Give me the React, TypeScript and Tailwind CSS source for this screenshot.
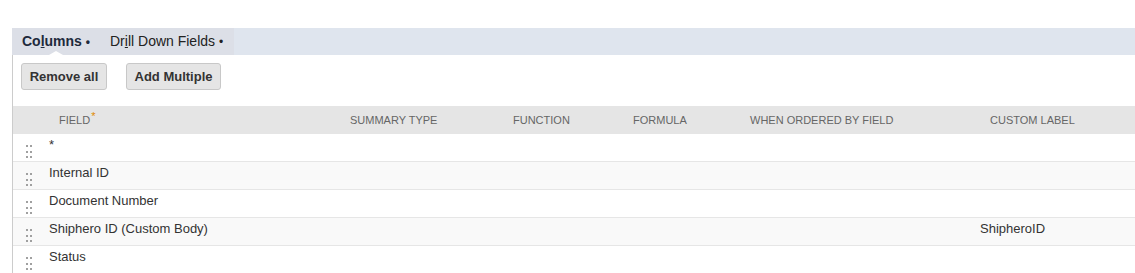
import React from "react";

const cols = "grid grid-cols-[26px_291px_163px_120px_117px_240px_1fr]";

function Handle() {
  return (
    <div className="grid grid-cols-2 gap-x-[2px] gap-y-[1px] w-[6px]">
      {Array.from({ length: 6 }).map((_, i) => (
        <div key={i} className="w-[2px] h-[2px] bg-[#a0a0a0]" />
      ))}
    </div>
  );
}

const rows = [
  { f: "*", label: "" },
  { f: "Internal ID", label: "" },
  { f: "Document Number", label: "" },
  { f: "Shiphero ID (Custom Body)", label: "ShipheroID" },
  { f: "Status", label: "" },
];

export default function App() {
  return (
    <div className="w-[1135px] h-[273px] bg-white overflow-hidden font-['Liberation_Sans',Arial,sans-serif] text-[13px] text-[#333]">
      <div className="h-[28px]" />
      <div className="ml-[12px] h-[27px] bg-[#dfe5ee] flex">
        <div className="relative flex items-center bg-[#dcdfe7] w-[222px] h-full text-[14px]">
          <span className="ml-[10px] font-bold text-[#1e2a3c]">
            Co<u>l</u>umns <span className="text-[12px]">•</span>
          </span>
          <span className="ml-[20px] text-[#222]">
            Dr<u>i</u>ll Down Fields <span className="text-[12px]">•</span>
          </span>
          <div className="absolute left-[37px] bottom-0 w-0 h-0 border-l-[7px] border-r-[7px] border-b-[4px] border-l-transparent border-r-transparent border-b-white" />
        </div>
      </div>
      <div className="ml-[12px] border-l border-[#cccccc]">
        <div className="flex gap-[19px] pl-[8px] pt-[8px] pb-[16px]">
          <button className="h-[27px] w-[86px] bg-[#e5e5e5] border border-[#c8c8c8] rounded-[3px] font-bold text-[13px] text-[#333]">
            Remove all
          </button>
          <button className="h-[27px] w-[95px] bg-[#e5e5e5] border border-[#c8c8c8] rounded-[3px] font-bold text-[13px] text-[#333]">
            Add Multiple
          </button>
        </div>
        <div className={`${cols} h-[28px] bg-[#e5e5e5] items-center text-[11px] text-[#666] uppercase`}>
          <div />
          <div className="pl-[20px]">
            Field<span className="text-[#e08a00] relative -top-[4px] ml-[1px]">*</span>
          </div>
          <div className="pl-[20px]">Summary Type</div>
          <div className="pl-[20px]">Function</div>
          <div className="pl-[20px]">Formula</div>
          <div className="pl-[20px]">When Ordered By Field</div>
          <div className="pl-[20px]">Custom Label</div>
        </div>
        {rows.map((r, i) => (
          <div
            key={i}
            className={`${cols} h-[28px] border-b border-[#e6e6e6] ${i % 2 === 1 ? "bg-[#f9f9f9]" : "bg-white"}`}
          >
            <div className="flex pl-[13px] pt-[11px]">
              <Handle />
            </div>
            <div className="pl-[10px] pt-[1px]">{r.f}</div>
            <div />
            <div />
            <div />
            <div />
            <div className="pl-[10px] pt-[1px]">{r.label}</div>
          </div>
        ))}
      </div>
    </div>
  );
}
